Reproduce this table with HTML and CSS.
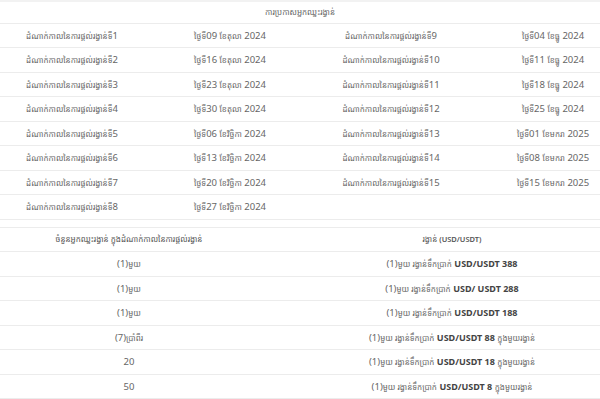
FILE: index.html
```html
<!DOCTYPE html>
<html lang="km">
<head>
    <meta charset="UTF-8">
    <meta name="viewport" content="width=device-width, initial-scale=1.0">
    <title>ការប្រកាសអ្នកឈ្នះរង្វាន់</title>
    <link rel="stylesheet" href="styles.css">
</head>
<body>
    <!-- Winners schedule -->
    <table class="schedule">
        <colgroup>
            <col class="c1"><col class="c2"><col class="c3"><col class="c4">
        </colgroup>
        <thead>
            <tr>
                <th colspan="4"><span class="km">ការប្រកាសអ្នកឈ្នះរង្វាន់</span></th>
            </tr>
        </thead>
        <tbody>
            <tr>
                <td><span class="km">ដំណាក់កាលនៃការផ្តល់រង្វាន់ទី</span>1</td>
                <td><span class="km">ថ្ងៃទី</span>09 <span class="km">ខែតុលា</span> 2024</td>
                <td><span class="km">ដំណាក់កាលនៃការផ្តល់រង្វាន់ទី</span>9</td>
                <td class="last"><span class="km">ថ្ងៃទី</span>04 <span class="km">ខែធ្នូ</span> 2024</td>
            </tr>
            <tr>
                <td><span class="km">ដំណាក់កាលនៃការផ្តល់រង្វាន់ទី</span>2</td>
                <td><span class="km">ថ្ងៃទី</span>16 <span class="km">ខែតុលា</span> 2024</td>
                <td><span class="km">ដំណាក់កាលនៃការផ្តល់រង្វាន់ទី</span>10</td>
                <td class="last"><span class="km">ថ្ងៃទី</span>11 <span class="km">ខែធ្នូ</span> 2024</td>
            </tr>
            <tr>
                <td><span class="km">ដំណាក់កាលនៃការផ្តល់រង្វាន់ទី</span>3</td>
                <td><span class="km">ថ្ងៃទី</span>23 <span class="km">ខែតុលា</span> 2024</td>
                <td><span class="km">ដំណាក់កាលនៃការផ្តល់រង្វាន់ទី</span>11</td>
                <td class="last"><span class="km">ថ្ងៃទី</span>18 <span class="km">ខែធ្នូ</span> 2024</td>
            </tr>
            <tr>
                <td><span class="km">ដំណាក់កាលនៃការផ្តល់រង្វាន់ទី</span>4</td>
                <td><span class="km">ថ្ងៃទី</span>30 <span class="km">ខែតុលា</span> 2024</td>
                <td><span class="km">ដំណាក់កាលនៃការផ្តល់រង្វាន់ទី</span>12</td>
                <td class="last"><span class="km">ថ្ងៃទី</span>25 <span class="km">ខែធ្នូ</span> 2024</td>
            </tr>
            <tr>
                <td><span class="km">ដំណាក់កាលនៃការផ្តល់រង្វាន់ទី</span>5</td>
                <td><span class="km">ថ្ងៃទី</span>06 <span class="km">ខែវិច្ឆិកា</span> 2024</td>
                <td><span class="km">ដំណាក់កាលនៃការផ្តល់រង្វាន់ទី</span>13</td>
                <td class="last"><span class="km">ថ្ងៃទី</span>01 <span class="km">ខែមករា</span> 2025</td>
            </tr>
            <tr>
                <td><span class="km">ដំណាក់កាលនៃការផ្តល់រង្វាន់ទី</span>6</td>
                <td><span class="km">ថ្ងៃទី</span>13 <span class="km">ខែវិច្ឆិកា</span> 2024</td>
                <td><span class="km">ដំណាក់កាលនៃការផ្តល់រង្វាន់ទី</span>14</td>
                <td class="last"><span class="km">ថ្ងៃទី</span>08 <span class="km">ខែមករា</span> 2025</td>
            </tr>
            <tr>
                <td><span class="km">ដំណាក់កាលនៃការផ្តល់រង្វាន់ទី</span>7</td>
                <td><span class="km">ថ្ងៃទី</span>20 <span class="km">ខែវិច្ឆិកា</span> 2024</td>
                <td><span class="km">ដំណាក់កាលនៃការផ្តល់រង្វាន់ទី</span>15</td>
                <td class="last"><span class="km">ថ្ងៃទី</span>15 <span class="km">ខែមករា</span> 2025</td>
            </tr>
            <tr>
                <td><span class="km">ដំណាក់កាលនៃការផ្តល់រង្វាន់ទី</span>8</td>
                <td><span class="km">ថ្ងៃទី</span>27 <span class="km">ខែវិច្ឆិកា</span> 2024</td>
                <td></td>
                <td class="last"></td>
            </tr>
        </tbody>
    </table>

    <!-- Prizes -->
    <table class="prizes">
        <thead>
            <tr>
                <th class="count"><span class="km">ចំនួនអ្នកឈ្នះរង្វាន់ ក្នុងដំណាក់កាលនៃការផ្តល់រង្វាន់</span></th>
                <th class="reward"><span class="km">រង្វាន់</span> (USD/USDT)</th>
            </tr>
        </thead>
        <tbody>
            <tr>
                <td class="count">(1)<span class="km">មួយ</span></td>
                <td class="reward">(1)<span class="km">មួយ រង្វាន់ទឹកប្រាក់</span> <b>USD/USDT 388</b></td>
            </tr>
            <tr>
                <td class="count">(1)<span class="km">មួយ</span></td>
                <td class="reward">(1)<span class="km">មួយ រង្វាន់ទឹកប្រាក់</span> <b>USD/ USDT 288</b></td>
            </tr>
            <tr>
                <td class="count">(1)<span class="km">មួយ</span></td>
                <td class="reward">(1)<span class="km">មួយ រង្វាន់ទឹកប្រាក់</span> <b>USD/USDT 188</b></td>
            </tr>
            <tr>
                <td class="count">(7)<span class="km">ប្រាំពីរ</span></td>
                <td class="reward">(1)<span class="km">មួយ រង្វាន់ទឹកប្រាក់</span> <b>USD/USDT 88</b> <span class="km">ក្នុងមួយរង្វាន់</span></td>
            </tr>
            <tr>
                <td class="count">20</td>
                <td class="reward">(1)<span class="km">មួយ រង្វាន់ទឹកប្រាក់</span> <b>USD/USDT 18</b> <span class="km">ក្នុងមួយរង្វាន់</span></td>
            </tr>
            <tr>
                <td class="count">50</td>
                <td class="reward">(1)<span class="km">មួយ រង្វាន់ទឹកប្រាក់</span> <b>USD/USDT 8</b> <span class="km">ក្នុងមួយរង្វាន់</span></td>
            </tr>
        </tbody>
    </table>
</body>
</html>
```

FILE: styles.css
```css
body {
    margin: 0;
    background-color: #fff;
    font-family: "Noto Sans", "Noto Sans Khmer", sans-serif;
    font-size: 9.5px;
    color: #666;
}
table {
    width: 100%;
    border-collapse: collapse;
}
th {
    font-weight: normal;
}
th,
td {
    text-align: center;
    padding: 5px 0;
    line-height: 13.5px;
    border-bottom: 1px solid #ececec;
    white-space: nowrap;
}
/* Khmer runs are set narrower and smaller than the latin digits */
.km {
    font-family: "Noto Sans Khmer", sans-serif;
    font-size: 8px;
    font-stretch: 62.5%;
}
.schedule {
    table-layout: fixed;
    border-top: 2px solid #f2f2f2;
}
.schedule .c1 { width: 144px; }
.schedule .c2 { width: 172px; }
.schedule .c3 { width: 150px; }
.schedule .c4 { width: 134px; }
.schedule th {
    padding: 3px 0 4px;
}
.schedule td.last {
    padding-left: 40px;
}
.prizes {
    margin-top: 7px;
    border-top: 1px solid #ececec;
}
.prizes th {
    padding: 4px 0 5px;
    font-size: 7.5px;
    font-weight: 600;
    color: #555;
}
.prizes th .km {
    font-weight: normal;
}
.prizes .count {
    width: 43%;
}
.prizes .reward {
    padding-left: 46px;
}
b {
    color: #444;
    font-weight: 700;
    font-size: 9px;
}
```
